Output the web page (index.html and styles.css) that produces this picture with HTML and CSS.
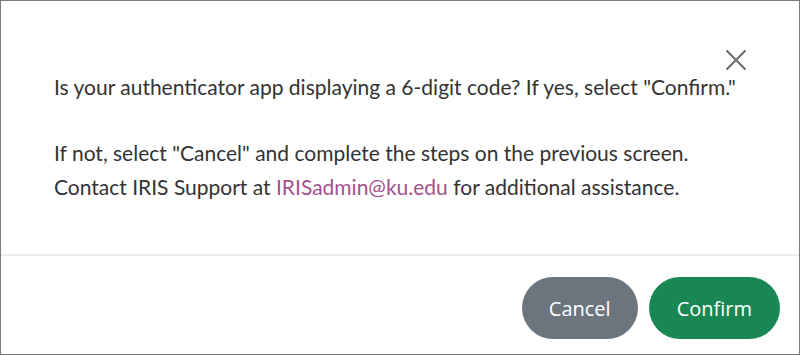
FILE: index.html
```html
<!DOCTYPE html>
<html>
<head>
    <title>Confirm authenticator</title>
    <link rel="stylesheet" href="styles.css">
</head>
<body>
    <div class="modal">
        <div class="modal-header">
            <button class="close" aria-label="Close">
                <svg width="22" height="22" viewBox="0 0 22 22">
                    <path d="M1.5 1.5 L20.5 20.5 M20.5 1.5 L1.5 20.5" stroke="#6b6b6b" stroke-width="2" fill="none"/>
                </svg>
            </button>
        </div>
        <div class="modal-body">
            <p>Is your authenticator app displaying a 6-digit code? If yes, select "Confirm."</p>
            <p>If not, select "Cancel" and complete the steps on the previous screen.<br>
            Contact IRIS Support at <a href="#">IRISadmin@ku.edu</a> for additional assistance.</p>
        </div>
        <div class="modal-footer">
            <button class="btn cancel">Cancel</button>
            <button class="btn confirm">Confirm</button>
        </div>
    </div>
</body>
</html>
```

FILE: styles.css
```css
* {
    box-sizing: border-box;
}

body {
    margin: 0;
    background-color: #fff;
}

.modal {
    width: 800px;
    height: 355px;
    border: 1px solid #7a7a7a;
    display: flex;
    flex-direction: column;
    font-family: Lato, "Open Sans", sans-serif;
    color: #333;
}

.modal-header {
    display: flex;
    justify-content: flex-end;
    padding: 48px 52px 0 0;
}

.close {
    width: 22px;
    height: 22px;
    padding: 0;
    border: none;
    background: none;
}

.close svg {
    display: block;
}

.modal-body {
    flex: 1;
    padding: 0 10px 0 53px;
    margin-top: -1px;
    font-size: 21px;
    line-height: 34px;
}

.modal-body p {
    margin: 0 0 32px 0;
}

.modal-body a {
    color: #a5508d;
    text-decoration: none;
}

.modal-footer {
    display: flex;
    justify-content: flex-end;
    gap: 11px;
    padding: 21px 19px 15px 0;
    border-top: 2px solid #ebebeb;
}

.btn {
    height: 62px;
    padding: 0 28px;
    border: none;
    border-radius: 31px;
    font-family: "Open Sans", sans-serif;
    font-size: 20px;
    color: #fff;
}

.cancel {
    padding: 0 27px;
    background-color: #6c757d;
}

.confirm {
    background-color: #198754;
}
```
